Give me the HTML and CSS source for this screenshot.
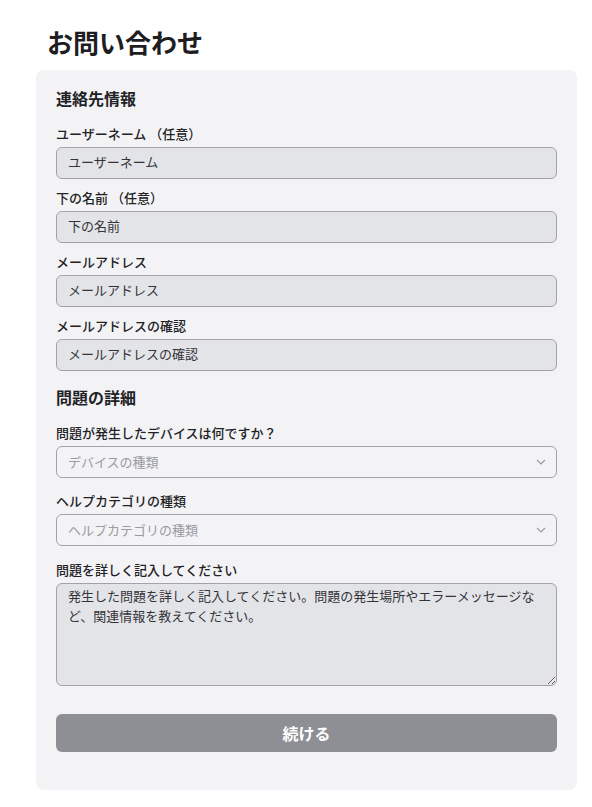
FILE: index.html
```html
<!DOCTYPE html>
<html lang="ja">
<head>
<meta charset="utf-8">
<title>お問い合わせ</title>
<link rel="stylesheet" href="styles.css">
</head>
<body>
<main class="page">
  <h1 class="title">お問い合わせ</h1>
  <form class="panel">
    <h2 class="section-title">連絡先情報</h2>
    <div class="field">
      <label class="label">ユーザーネーム （任意）</label>
      <input class="input" type="text" value="ユーザーネーム">
    </div>
    <div class="field">
      <label class="label">下の名前 （任意）</label>
      <input class="input" type="text" value="下の名前">
    </div>
    <div class="field">
      <label class="label">メールアドレス</label>
      <input class="input" type="text" value="メールアドレス">
    </div>
    <div class="field">
      <label class="label">メールアドレスの確認</label>
      <input class="input" type="text" value="メールアドレスの確認">
    </div>

    <h2 class="section-title section-gap">問題の詳細</h2>
    <div class="field field-select">
      <label class="label">問題が発生したデバイスは何ですか？</label>
      <div class="select-wrap">
        <select class="select"><option>デバイスの種類</option></select>
        <svg class="chevron" width="10" height="6" viewBox="0 0 10 6"><path d="M1 1l4 4 4-4" fill="none" stroke="#9a9aa0" stroke-width="1.2"/></svg>
      </div>
    </div>
    <div class="field field-select field-select-last">
      <label class="label">ヘルプカテゴリの種類</label>
      <div class="select-wrap">
        <select class="select"><option>ヘルプカテゴリの種類</option></select>
        <svg class="chevron" width="10" height="6" viewBox="0 0 10 6"><path d="M1 1l4 4 4-4" fill="none" stroke="#9a9aa0" stroke-width="1.2"/></svg>
      </div>
    </div>
    <div class="field">
      <label class="label">問題を詳しく記入してください</label>
      <textarea class="textarea">発生した問題を詳しく記入してください。問題の発生場所やエラーメッセージなど、関連情報を教えてください。</textarea>
    </div>
    <button class="button" type="button">続ける</button>
  </form>
</main>
</body>
</html>
```
FILE: styles.css
```css
* { box-sizing: border-box; }
html, body { margin: 0; padding: 0; background: #ffffff; }
body {
  font-family: "Noto Sans CJK JP", "Noto Sans", sans-serif;
  color: #222226;
}
.page {
  padding: 24px 15px 19px 36px;
}
.title {
  margin: 0 0 10px 0;
  padding-left: 11px;
  font-size: 26px;
  line-height: 36px;
  font-weight: 700;
  color: #1e1e22;
}
.panel {
  background: #f3f3f5;
  border-radius: 8px;
  padding: 16px 20px 38px 20px;
  display: flex;
  flex-direction: column;
}
.section-title {
  margin: 0 0 14px 0;
  font-size: 16px;
  line-height: 24px;
  font-weight: 700;
  color: #222226;
}
.section-gap { margin-top: 5px; }
.field {
  display: flex;
  flex-direction: column;
  margin-bottom: 9px;
}
.field-select { margin-bottom: 13px; }
.field-select-last { margin-bottom: 14px; }
.label {
  font-size: 13px;
  line-height: 20px;
  margin-bottom: 3px;
  font-weight: 500;
  color: #222226;
}
.input {
  height: 32px;
  border: 1px solid #a2a2a8;
  border-radius: 6px;
  background: #e3e4e8;
  padding: 0 11px 3px 11px;
  font-family: inherit;
  font-size: 13px;
  color: #333338;
  outline: none;
}
.select-wrap { position: relative; }
.select {
  width: 100%;
  height: 32px;
  -webkit-appearance: none;
  appearance: none;
  border: 1px solid #a2a2a8;
  border-radius: 6px;
  background: #f3f3f5;
  padding: 0 11px 2px 11px;
  font-family: inherit;
  font-size: 13px;
  color: #9a9aa0;
  outline: none;
}
.chevron {
  position: absolute;
  right: 11px;
  top: 13px;
  pointer-events: none;
}
.textarea {
  height: 103px;
  border: 1px solid #a2a2a8;
  border-radius: 6px;
  background: #e3e4e8;
  padding: 2px 11px;
  font-family: inherit;
  font-size: 13px;
  line-height: 20px;
  color: #333338;
  resize: vertical;
  outline: none;
}
.button {
  margin-top: 19px;
  height: 38px;
  border: none;
  border-radius: 6px;
  background: #8e8f94;
  color: #ffffff;
  font-family: inherit;
  font-size: 16px;
  font-weight: 700;
}
```
